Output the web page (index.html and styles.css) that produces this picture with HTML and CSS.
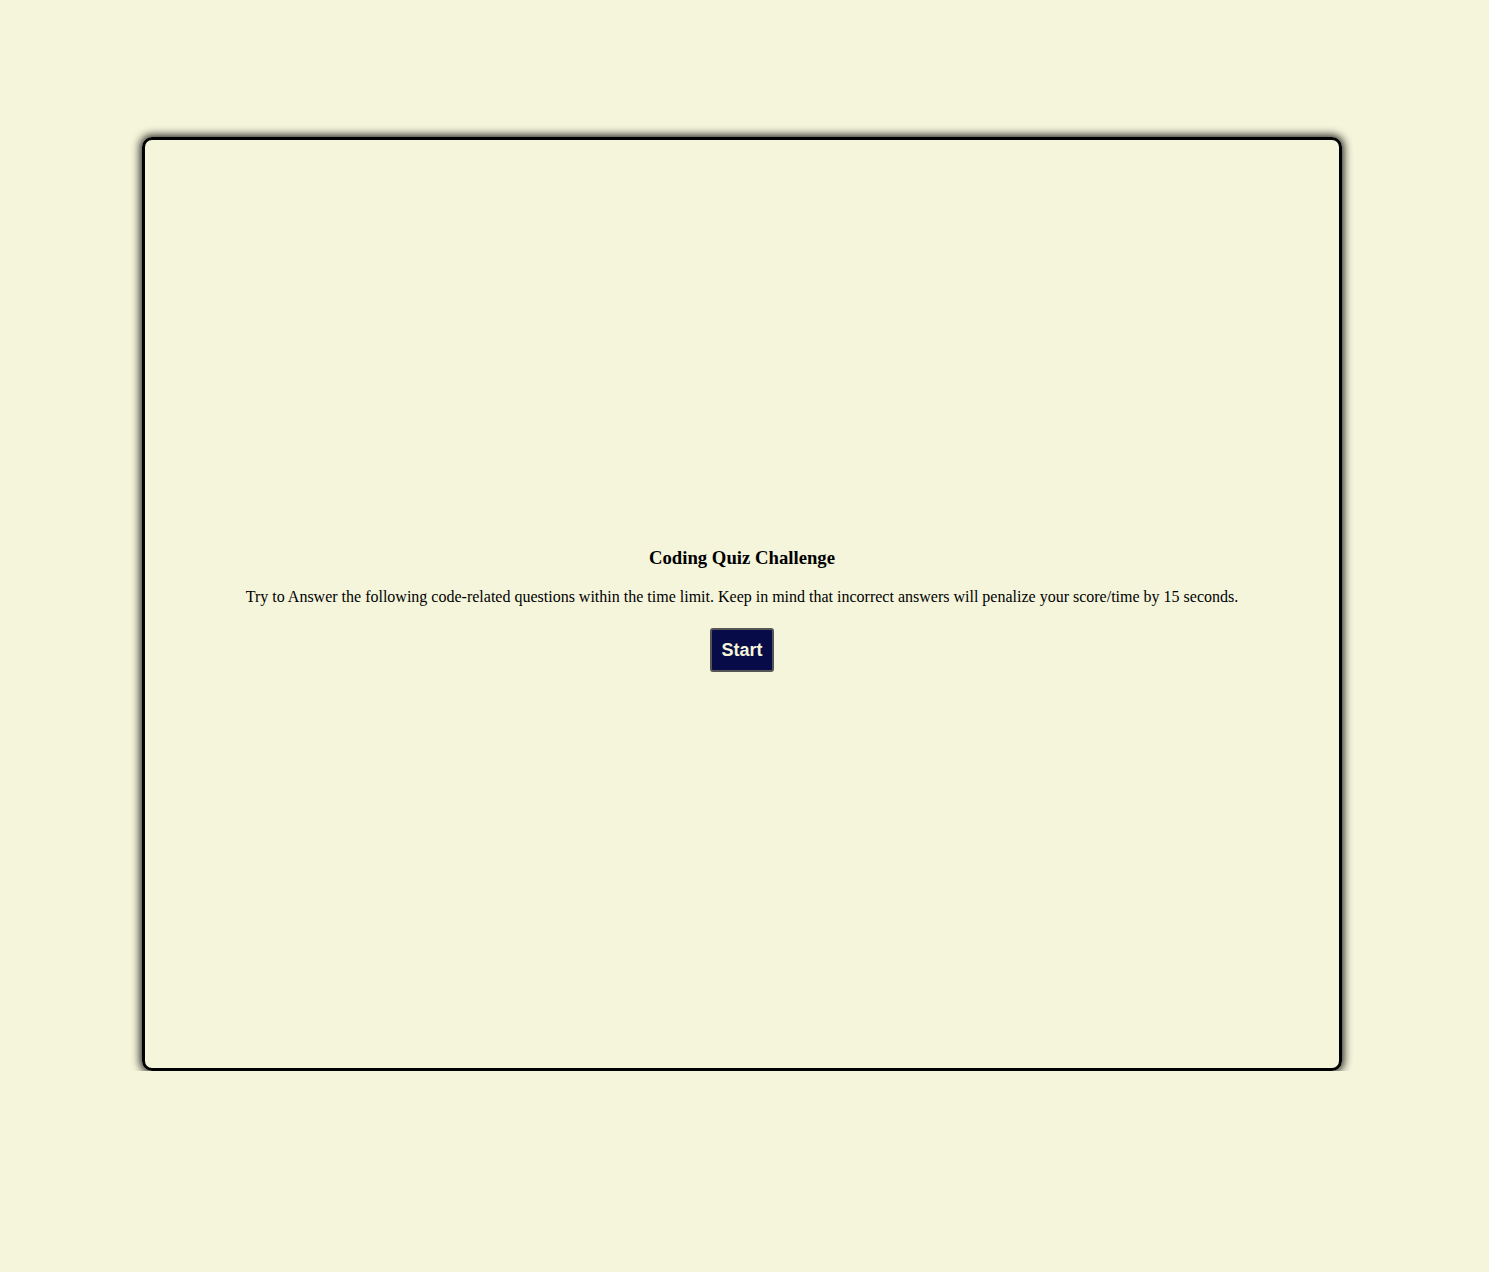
FILE: index.html
```html
<!DOCTYPE html>
<html>
<head>
<meta charset="utf-8">
<title>Coding Quiz</title>
<link rel="stylesheet" href="styles.css">
</head>
<body>
<main class="quiz">
  <section class="intro">
    <h3 class="title">Coding Quiz Challenge</h3>
    <p class="desc">Try to Answer the following code-related questions within the time limit. Keep in mind that incorrect answers will penalize your score/time by 15 seconds.</p>
    <button class="start">Start</button>
  </section>
</main>
</body>
</html>
```
FILE: styles.css
```css
html, body {
  margin: 0;
  padding: 0;
}
body {
  background: #f5f5dc;
  font-family: "Liberation Serif", "Times New Roman", serif;
  color: #000;
  padding-top: 137px;
}
.quiz {
  box-sizing: border-box;
  width: 1200px;
  height: 934px;
  margin: 0 0 0 142px;
  border: 3px solid #000;
  border-radius: 10px;
  box-shadow: 0 0 8px 2px rgba(0,0,0,0.85);
  display: flex;
  align-items: center;
  justify-content: center;
}
.intro {
  text-align: center;
  padding-top: 11px;
}
.title {
  font-size: 18.72px;
  font-weight: bold;
  margin: 0 0 19px;
}
.desc {
  font-size: 16px;
  margin: 0 0 22px;
}
.start {
  font-family: "Liberation Sans", Arial, sans-serif;
  font-weight: bold;
  font-size: 18px;
  color: #f5f5dc;
  background: #070b47;
  border: 2px solid #555;
  border-radius: 3px;
  padding: 10px 9px 9px;
}
```
